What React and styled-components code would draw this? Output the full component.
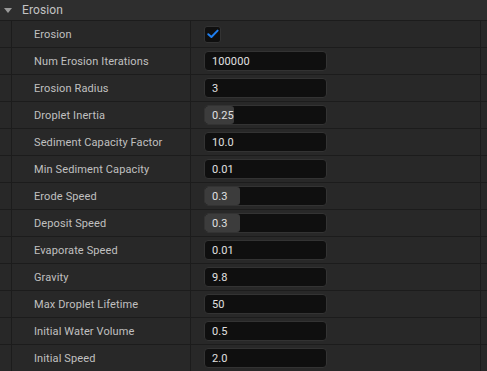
import React from 'react';
import styled, { createGlobalStyle } from 'styled-components';

const Global = createGlobalStyle`
    html, body {
        margin: 0;
        padding: 0;
        background: #282828;
        font-family: Roboto, "Noto Sans", sans-serif;
    }
`;

const Panel = styled.div`
    width: 487px;
    height: 371px;
    overflow: hidden;
    background: #282828;
`;

const Header = styled.div`
    height: 20px;
    display: flex;
    align-items: center;
    gap: 10px;
    padding-left: 4px;
    background: #2e2e2e;
    border-bottom: 1px solid #1c1c1c;
    color: #c4c4c4;
    font-size: 12px;
    letter-spacing: 0.1px;
`;

const Arrow = styled.span`
    width: 0;
    height: 0;
    border-left: 4px solid transparent;
    border-right: 4px solid transparent;
    border-top: 5px solid #9a9a9a;
    margin-top: 1px;
`;

const Row = styled.div`
    height: 26px;
    display: grid;
    grid-template-columns: 12px 1fr 290px 6px;
    border-bottom: 1px solid #1c1c1c;
`;

const Gutter = styled.div`
    border-right: 1px solid #1c1c1c;
`;

const Label = styled.div`
    display: flex;
    align-items: center;
    padding-left: 22px;
    border-right: 1px solid #1c1c1c;
    color: #c0c0c0;
    font-size: 11px;
    letter-spacing: 0.12px;
`;

const Value = styled.div`
    display: flex;
    align-items: center;
    padding-left: 13px;
    border-right: 1px solid #1c1c1c;
`;

const Input = styled.div`
    position: relative;
    width: 123px;
    height: 20px;
    box-sizing: border-box;
    background: #0f0f0f;
    border: 1px solid #333;
    border-radius: 4px;
    overflow: hidden;
    display: flex;
    align-items: center;
    color: #e0e0e0;
    font-size: 11px;
    letter-spacing: 0.1px;
`;

const Fill = styled.div`
    position: absolute;
    left: 0;
    top: 0;
    bottom: 0;
    background: #3c3c3c;
    border-radius: 3px;
`;

const Text = styled.span`
    position: relative;
    padding-left: 7px;
`;

const Check = styled.div`
    width: 17px;
    height: 17px;
    box-sizing: border-box;
    background: #0f0f0f;
    border: 1px solid #333;
    border-radius: 3px;
    display: flex;
    align-items: center;
    justify-content: center;
`;

const rows = [
    { label: 'Erosion', check: true },
    { label: 'Num Erosion Iterations', value: '100000' },
    { label: 'Erosion Radius', value: '3' },
    { label: 'Droplet Inertia', value: '0.25', fill: 29 },
    { label: 'Sediment Capacity Factor', value: '10.0' },
    { label: 'Min Sediment Capacity', value: '0.01' },
    { label: 'Erode Speed', value: '0.3', fill: 35 },
    { label: 'Deposit Speed', value: '0.3', fill: 35 },
    { label: 'Evaporate Speed', value: '0.01' },
    { label: 'Gravity', value: '9.8' },
    { label: 'Max Droplet Lifetime', value: '50' },
    { label: 'Initial Water Volume', value: '0.5' },
    { label: 'Initial Speed', value: '2.0' },
];

const App = () => {
    return (
        <Panel>
            <Global />
            <Header>
                <Arrow />
                <span>Erosion</span>
            </Header>
            {rows.map((r) => (
                <Row key={r.label}>
                    <Gutter />
                    <Label>{r.label}</Label>
                    <Value>
                        {r.check ? (
                            <Check>
                                <svg width="12" height="10" viewBox="0 0 12 10">
                                    <path d="M1.3 5.2 L4.4 8 L10.6 1.6" fill="none" stroke="#1f7ff0" strokeWidth="2" strokeLinecap="round" strokeLinejoin="round" />
                                </svg>
                            </Check>
                        ) : (
                            <Input>
                                {r.fill && <Fill style={{ width: r.fill }} />}
                                <Text>{r.value}</Text>
                            </Input>
                        )}
                    </Value>
                    <div />
                </Row>
            ))}
        </Panel>
    );
};

export default App;
